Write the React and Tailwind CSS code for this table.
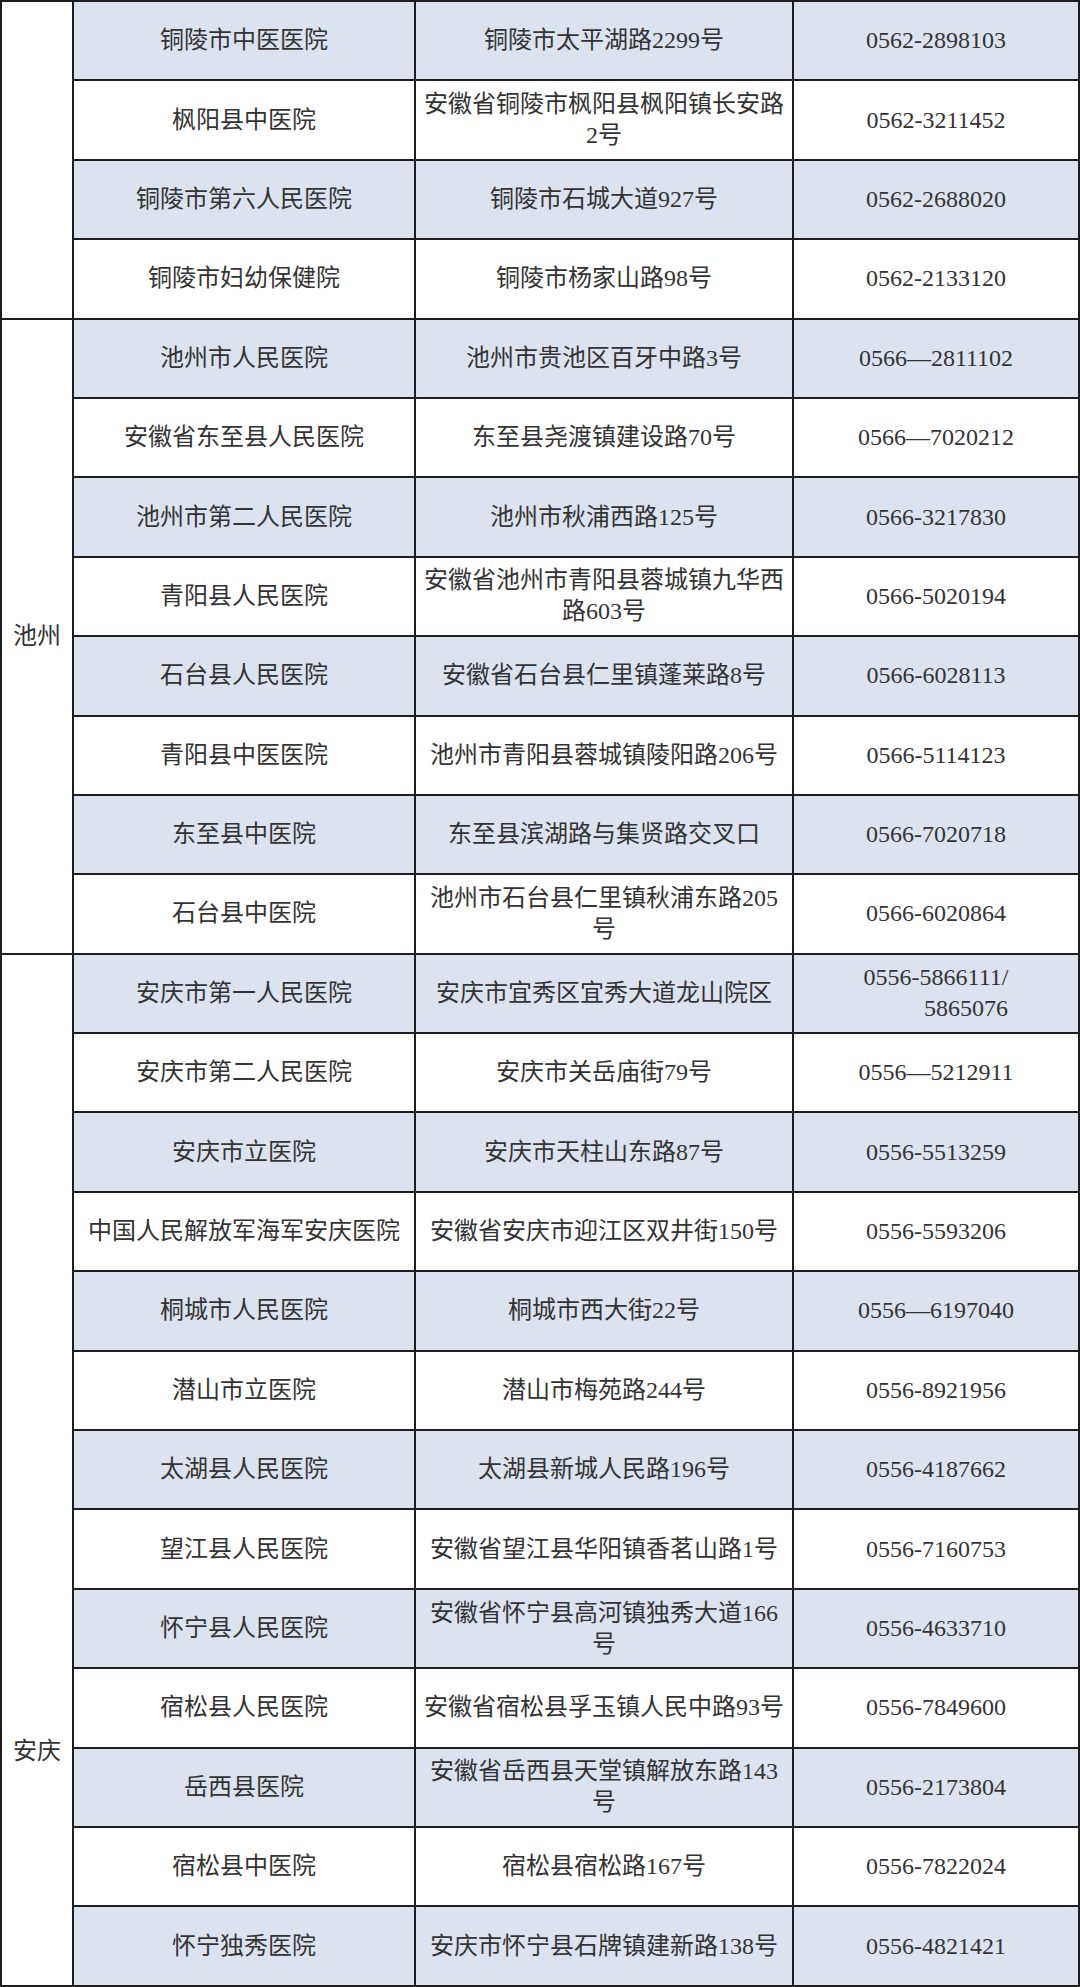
import React from "react";

const rows = [
  ["铜陵市中医医院", "铜陵市太平湖路2299号", "0562-2898103"],
  ["枫阳县中医院", "安徽省铜陵市枫阳县枫阳镇长安路\n2号", "0562-3211452"],
  ["铜陵市第六人民医院", "铜陵市石城大道927号", "0562-2688020"],
  ["铜陵市妇幼保健院", "铜陵市杨家山路98号", "0562-2133120"],
  ["池州市人民医院", "池州市贵池区百牙中路3号", "0566—2811102"],
  ["安徽省东至县人民医院", "东至县尧渡镇建设路70号", "0566—7020212"],
  ["池州市第二人民医院", "池州市秋浦西路125号", "0566-3217830"],
  ["青阳县人民医院", "安徽省池州市青阳县蓉城镇九华西\n路603号", "0566-5020194"],
  ["石台县人民医院", "安徽省石台县仁里镇蓬莱路8号", "0566-6028113"],
  ["青阳县中医医院", "池州市青阳县蓉城镇陵阳路206号", "0566-5114123"],
  ["东至县中医院", "东至县滨湖路与集贤路交叉口", "0566-7020718"],
  ["石台县中医院", "池州市石台县仁里镇秋浦东路205\n号", "0566-6020864"],
  ["安庆市第一人民医院", "安庆市宜秀区宜秀大道龙山院区", "SPLIT"],
  ["安庆市第二人民医院", "安庆市关岳庙街79号", "0556—5212911"],
  ["安庆市立医院", "安庆市天柱山东路87号", "0556-5513259"],
  ["中国人民解放军海军安庆医院", "安徽省安庆市迎江区双井街150号", "0556-5593206"],
  ["桐城市人民医院", "桐城市西大街22号", "0556—6197040"],
  ["潜山市立医院", "潜山市梅苑路244号", "0556-8921956"],
  ["太湖县人民医院", "太湖县新城人民路196号", "0556-4187662"],
  ["望江县人民医院", "安徽省望江县华阳镇香茗山路1号", "0556-7160753"],
  ["怀宁县人民医院", "安徽省怀宁县高河镇独秀大道166\n号", "0556-4633710"],
  ["宿松县人民医院", "安徽省宿松县孚玉镇人民中路93号", "0556-7849600"],
  ["岳西县医院", "安徽省岳西县天堂镇解放东路143\n号", "0556-2173804"],
  ["宿松县中医院", "宿松县宿松路167号", "0556-7822024"],
  ["怀宁独秀医院", "安庆市怀宁县石牌镇建新路138号", "0556-4821421"],
];

function Cell({ blue, children, col }) {
  return (
    <div
      className={`${blue ? "bg-[#dce3ef]" : "bg-white"} ${col} flex items-center justify-center text-center whitespace-pre-line leading-[31px]`}
    >
      <div>{children}</div>
    </div>
  );
}

export default function App() {
  return (
    <div
      className="w-[1080px] h-[1987px] bg-[#1e1e1e] p-[2px] grid gap-[2px] text-[24px] text-[#333333] overflow-hidden"
      style={{
        fontFamily: "'Liberation Serif', 'Noto Sans CJK SC', serif",
        gridTemplateColumns: "70px 340px 376px 284px",
        gridTemplateRows: "repeat(25, 77.4px)",
      }}
    >
      <div className="bg-white col-start-1 row-start-1 row-span-4"></div>
      <div className="bg-white col-start-1 row-start-5 row-span-8 flex items-center justify-center leading-[31px]">
        池州
      </div>
      <div className="bg-white col-start-1 row-start-13 row-span-13 flex flex-col items-center justify-start pt-[781px] leading-[31px]">
        安庆
      </div>
      {rows.map((r, i) => {
        const blue = i % 2 === 0;
        return (
          <React.Fragment key={i}>
            <Cell blue={blue} col="col-start-2">
              {r[0]}
            </Cell>
            <Cell blue={blue} col="col-start-3">
              {r[1]}
            </Cell>
            <Cell blue={blue} col="col-start-4">
              {r[2] === "SPLIT" ? (
                <>
                  <span className="block">0556-5866111/</span>
                  <span className="block pl-[60px]">5865076</span>
                </>
              ) : (
                r[2]
              )}
            </Cell>
          </React.Fragment>
        );
      })}
    </div>
  );
}
